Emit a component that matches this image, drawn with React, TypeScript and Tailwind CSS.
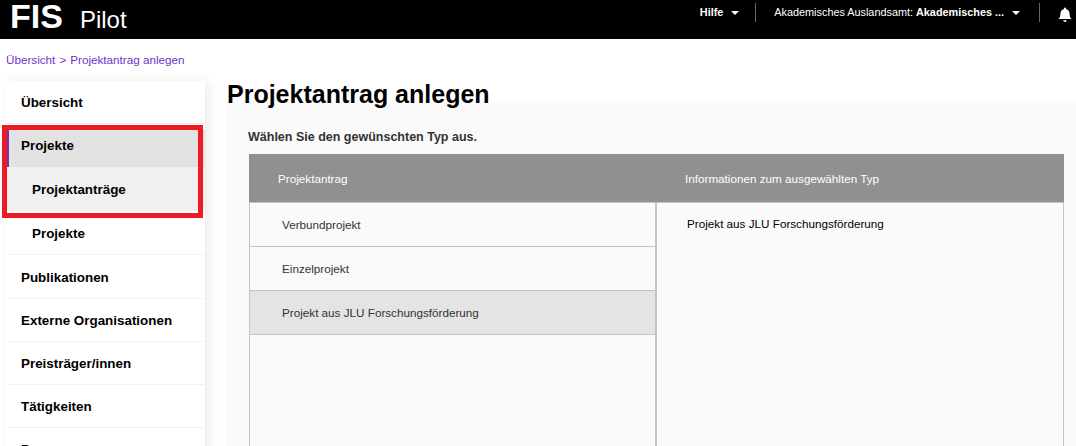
const types = ["Verbundprojekt", "Einzelprojekt", "Projekt aus JLU Forschungsförderung"];

function Caret() {
  return <span className="inline-block border-x-[4.5px] border-t-[4.5px] border-x-transparent border-t-white" />;
}

function NavItem({ label, sub, h }: { label: string; sub?: boolean; h: string }) {
  return (
    <div className={`flex items-center border-b border-[#f1f1f1] pt-[3px] text-[13.4px] font-bold text-black ${h} ${sub ? "pl-[26px]" : "pl-[15px]"}`}>
      {label}
    </div>
  );
}

export default function App() {
  return (
    <div className="h-[446px] w-[1076px] overflow-hidden bg-white font-['Liberation_Sans',Arial,sans-serif]">
      <header className="flex h-[39px] items-start bg-black text-white">
        <div className="ml-[10px] flex items-baseline">
          <span className="text-[34px] leading-[32px] font-bold">FIS</span>
          <span className="ml-[17px] text-[24px] leading-[32px] font-normal">Pilot</span>
        </div>
        <div className="ml-auto flex items-start pt-[3px] text-[10.85px]">
          <div className="flex h-[19px] items-center gap-[8px] border-r border-[#666] pr-[16px] font-bold">
            Hilfe <Caret />
          </div>
          <div className="flex h-[19px] items-center gap-[8px] border-r border-[#666] pr-[19px] pl-[18px]">
            <span>
              Akademisches Auslandsamt: <b>Akademisches ...</b>
            </span>
            <Caret />
          </div>
          <div className="pt-[4px] pr-[4px] pl-[18px]">
            <svg width="14" height="16" viewBox="0 0 14 16" fill="white">
              <path d="M7 0.5a1 1 0 0 1 1 1v.6c2.400.5 3.600 2.400 3.600 4.900 0 2.800.8 3.900 2 5H.4c1.200-1.100 2-2.200 2-5 0-2.500 1.200-4.400 3.600-4.900v-.6a1 1 0 0 1 1-1z" />
              <path d="M5.200 13.300h3.600a1.800 1.800 0 0 1-3.600 0z" />
            </svg>
          </div>
        </div>
      </header>

      <nav className="flex h-[42px] items-center pl-[6px] text-[11.7px] text-[#6a35c9]">
        <span>Übersicht</span>
        <span className="ml-[4px]">&gt;</span>
        <span className="ml-[4px]">Projektantrag anlegen</span>
      </nav>

      <div className="flex">
        <aside className="relative ml-[6px] h-[400px] w-[199px] shrink-0 bg-white shadow-[4px_0_12px_rgba(0,0,0,0.08)]">
          <NavItem label="Übersicht" h="h-[43px]" />
          <div className="h-[5px]" />
          <div className="flex h-[38px] items-center border-l-[3px] border-[#6b35b5] bg-[#e2e2e2] pb-[3px] pl-[12px] text-[13.4px] font-bold text-black">
            Projekte
          </div>
          <div className="flex h-[44px] items-center bg-[#f0f0f0] pt-[3px] pl-[26px] text-[13.4px] font-bold text-black">Projektanträge</div>
          <NavItem label="Projekte" sub h="h-[44px]" />
          <NavItem label="Publikationen" h="h-[44px]" />
          <NavItem label="Externe Organisationen" h="h-[43px]" />
          <NavItem label="Preisträger/innen" h="h-[43px]" />
          <NavItem label="Tätigkeiten" h="h-[43px]" />
          <NavItem label="Personen" h="h-[43px]" />
          <div className="absolute top-[44px] -left-[4px] h-[93px] w-[201px] border-[5px] border-[#ed1c24]" />
        </aside>

        <main className="ml-[21px] flex-1">
          <h1 className="relative ml-[1px] h-[32px] text-[25px] leading-[26px] font-bold text-black">Projektantrag anlegen</h1>
          <div className="-mt-[18px] h-[400px] bg-[linear-gradient(#ffffff,#fafafa_12px)] pt-[33px] pl-[23px]">
            <p className="-ml-[1px] h-[26px] text-[12.5px] leading-[18px] font-bold text-[#333]">Wählen Sie den gewünschten Typ aus.</p>
            <div className="flex h-[48px] w-[815px] items-center bg-[#909090] pt-[2px] text-[11.7px] text-white">
              <span className="ml-[29px] w-[407px]">Projektantrag</span>
              <span>Informationen zum ausgewählten Typ</span>
            </div>
            <div className="flex h-[300px] w-[815px] border-x border-t border-[#c4c4c4] text-[11.7px]">
              <div className="w-[407px] border-r-2 border-[#c4c4c4]">
                {types.map((t, i) => (
                  <div
                    key={t}
                    className={`flex h-[44px] items-center border-b border-[#c4c4c4] pl-[32px] text-[#333] ${i === 2 ? "bg-[#e4e4e4]" : ""}`}
                  >
                    {t}
                  </div>
                ))}
              </div>
              <div className="pt-[12px] pl-[30px] text-black">Projekt aus JLU Forschungsförderung</div>
            </div>
          </div>
        </main>
      </div>
    </div>
  );
}
